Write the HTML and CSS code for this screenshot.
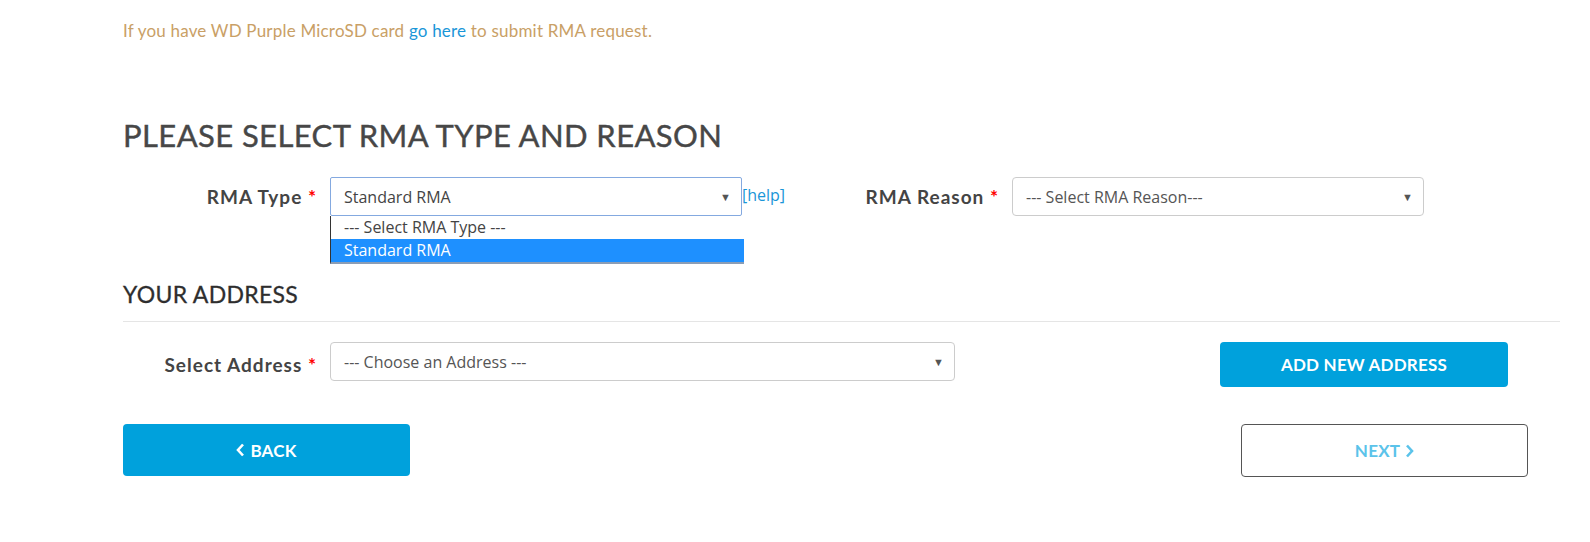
FILE: index.html
```
<!DOCTYPE html>
<html lang="en">
<head>
    <meta charset="UTF-8">
    <meta name="viewport" content="width=device-width, initial-scale=1.0">
    <title>RMA Request</title>
    <link rel="stylesheet" href="styles.css">
</head>
<body>
    <div class="page">
        <p class="notice">If you have WD Purple MicroSD card <a href="#">go here</a> to submit RMA request.</p>

        <h2 class="section-title">PLEASE SELECT RMA TYPE AND REASON</h2>

        <div class="form-row">
            <div class="form-group">
                <label class="field-label">RMA Type <span class="req">*</span></label>
                <div class="select-wrap">
                    <div class="select-box focused">
                        <span>Standard RMA</span>
                        <span class="caret">&#9660;</span>
                    </div>
                    <ul class="select-list">
                        <li>--- Select RMA Type ---</li>
                        <li class="selected">Standard RMA</li>
                    </ul>
                </div>
                <a href="#" class="help">[help]</a>
            </div>
            <div class="form-group">
                <label class="field-label">RMA Reason <span class="req">*</span></label>
                <div class="select-box">
                    <span>--- Select RMA Reason---</span>
                    <span class="caret">&#9660;</span>
                </div>
            </div>
        </div>

        <h3 class="sub-title">YOUR ADDRESS</h3>
        <hr>

        <div class="form-row address-row">
            <label class="field-label">Select Address <span class="req">*</span></label>
            <div class="select-box wide">
                <span>--- Choose an Address ---</span>
                <span class="caret">&#9660;</span>
            </div>
            <button class="btn btn-primary add-btn">ADD NEW ADDRESS</button>
        </div>

        <div class="nav-row">
            <button class="btn btn-primary nav-btn">
                <svg class="chev" width="9" height="14" viewBox="0 0 9 14"><polyline points="7,1.5 2,7 7,12.5" fill="none" stroke="currentColor" stroke-width="2.6"/></svg>
                BACK
            </button>
            <button class="btn btn-outline nav-btn">
                NEXT
                <svg class="chev" width="9" height="14" viewBox="0 0 9 14"><polyline points="2,1.5 7,7 2,12.5" fill="none" stroke="currentColor" stroke-width="2.6"/></svg>
            </button>
        </div>
    </div>
</body>
</html>
```

FILE: styles.css
```
body {
    margin: 0;
    font-family: Lato, "Liberation Sans", sans-serif;
    background: white;
    color: #444;
}

.page {
    width: 1437px;
    margin-left: 123px;
    padding-top: 19px;
}

.notice {
    margin: 0;
    font-size: 17px;
    line-height: 24px;
    color: #c9a066;
    letter-spacing: 0.2px;
}

.notice a {
    color: #1a96d8;
    text-decoration: none;
}

.section-title {
    margin: 74px 0 0;
    font-size: 31px;
    font-weight: 400;
    line-height: 36px;
    color: #474747;
    letter-spacing: 0.4px;
    -webkit-text-stroke: 0.4px #474747;
}

.form-row {
    display: flex;
    margin-top: 24px;
}

.form-group {
    display: flex;
    align-items: center;
    width: 682px;
    position: relative;
}

.field-label {
    width: 194px;
    margin-right: 13px;
    text-align: right;
    font-size: 19px;
    font-weight: 700;
    color: #444;
    letter-spacing: 1px;
}

.req {
    color: #f00;
}

.select-wrap {
    position: relative;
}

.select-box {
    box-sizing: border-box;
    width: 412px;
    height: 39px;
    border: 1px solid #ccc;
    border-radius: 4px;
    padding: 0 10px 0 13px;
    display: flex;
    justify-content: space-between;
    align-items: center;
    font-family: "Open Sans", sans-serif;
    font-size: 16px;
    color: #555;
}

.select-box.focused {
    border-color: #84a9e0;
    border-radius: 2px;
    color: #444;
}

.select-box.wide {
    width: 625px;
}

.caret {
    font-size: 11px;
    color: #555;
}

.select-list {
    position: absolute;
    top: 39px;
    left: 0;
    width: 413px;
    margin: 0;
    padding: 0;
    list-style: none;
    background: white;
    border-left: 1px solid #333;
    border-bottom: 2px solid #8b9db5;
    font-family: "Open Sans", sans-serif;
    font-size: 16px;
    color: #444;
}

.select-list li {
    height: 23px;
    line-height: 23px;
    padding-left: 13px;
}

.select-list li.selected {
    background: #1e90ff;
    color: white;
}

.help {
    align-self: flex-start;
    margin-top: 7px;
    font-family: "Open Sans", sans-serif;
    font-size: 16px;
    color: #1a96d8;
    text-decoration: none;
}

.sub-title {
    margin: 65px 0 0;
    font-size: 23px;
    font-weight: 400;
    line-height: 26px;
    color: #2e2e2e;
    letter-spacing: 0.3px;
    -webkit-text-stroke: 0.3px #2e2e2e;
}

hr {
    margin: 14px 0 0;
    border: none;
    border-top: 1px solid #e5e5e5;
}

.address-row {
    margin-top: 20px;
    align-items: flex-start;
}

.address-row .field-label {
    align-self: center;
}

.btn {
    font-family: Lato, "Liberation Sans", sans-serif;
    font-weight: 700;
    font-size: 17px;
    border-radius: 4px;
    cursor: pointer;
    letter-spacing: 0.2px;
}

.btn-primary {
    background: #00a1dc;
    color: white;
    border: none;
}

.add-btn {
    width: 288px;
    height: 45px;
    margin-left: 265px;
}

.nav-row {
    display: flex;
    justify-content: space-between;
    width: 1405px;
    margin-top: 37px;
}

.nav-btn {
    width: 287px;
    height: 52px;
    display: flex;
    align-items: center;
    justify-content: center;
    gap: 5px;
}

.btn-outline {
    background: white;
    color: #5bc3ea;
    border: 1px solid #555;
    height: 53px;
}
```
